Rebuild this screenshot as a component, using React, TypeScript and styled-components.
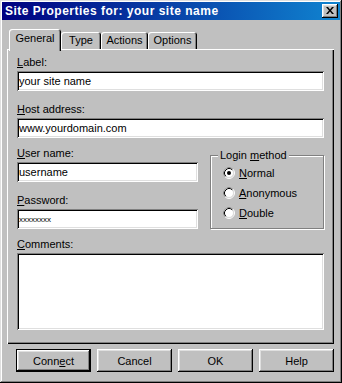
import React from "react";
import styled, { createGlobalStyle } from "styled-components";

const GlobalStyle = createGlobalStyle`
  html, body {
    margin: 0;
    padding: 0;
    background: #c0c0c0;
  }
  body {
    font-family: "Liberation Sans", Arial, sans-serif;
    font-size: 11px;
    color: #000;
  }
  * { box-sizing: border-box; }
`;

const Window = styled.div`
  width: 342px;
  height: 383px;
  padding: 2px;
  background: #c0c0c0;
  box-shadow: inset -1px -1px #000, inset 1px 1px #dfdfdf,
    inset -2px -2px #808080, inset 2px 2px #fff;
  display: flex;
  flex-direction: column;
`;

const TitleBar = styled.div`
  height: 18px;
  display: flex;
  align-items: center;
  justify-content: space-between;
  padding: 0 2px 0 3px;
  background: linear-gradient(90deg, #000080, #1084d0);
  color: #fff;
  font-weight: bold;
  font-size: 12px;
  letter-spacing: 0.5px;
`;

const CloseButton = styled.div`
  width: 16px;
  height: 14px;
  background: #c0c0c0;
  box-shadow: inset -1px -1px #000, inset 1px 1px #fff,
    inset -2px -2px #808080, inset 2px 2px #dfdfdf;
  display: flex;
  align-items: center;
  justify-content: center;
  padding-bottom: 1px;
`;

const Body = styled.div`
  padding: 9px 6px 0 5px;
  display: flex;
  flex-direction: column;
`;

const TabStrip = styled.div`
  display: flex;
  align-items: flex-end;
  height: 20px;
  padding-left: 2px;
  position: relative;
  z-index: 1;
`;

const Tab = styled.div<{ $active?: boolean; $w: number }>`
  width: ${(p) => p.$w}px;
  height: ${(p) => (p.$active ? 22 : 17)}px;
  margin-bottom: ${(p) => (p.$active ? -2 : 0)}px;
  background: #c0c0c0;
  border-radius: 3px 3px 0 0;
  box-shadow: inset 1px 1px #fff, inset -1px 0 #000, inset -2px 0 #808080;
  display: flex;
  justify-content: center;
  padding-top: ${(p) => (p.$active ? 3 : 2)}px;
  line-height: 13px;
`;

const Panel = styled.div`
  width: 327px;
  height: 295px;
  padding: 7px 10px 0 10px;
  box-shadow: inset 1px 1px #fff, inset -1px -1px #000,
    inset -2px -2px #808080;
  display: flex;
  flex-direction: column;
`;

const Field = styled.div<{ $mt?: number; $w?: number }>`
  margin-top: ${(p) => p.$mt ?? 0}px;
  width: ${(p) => (p.$w ? `${p.$w}px` : "auto")};
  display: flex;
  flex-direction: column;
`;

const Label = styled.div`
  height: 13px;
  line-height: 13px;
  margin-bottom: 2px;
`;

const Key = styled.span`
  text-decoration: underline;
`;

const sunken = `
  box-shadow: inset 1px 1px #808080, inset -1px -1px #fff,
    inset 2px 2px #000, inset -2px -2px #dfdfdf;
`;

const TextInput = styled.input<{ $small?: boolean }>`
  height: 20px;
  width: 100%;
  border: none;
  outline: none;
  padding: 0 2px;
  margin: 0;
  background: #fff;
  font-family: "Liberation Sans", Arial, sans-serif;
  font-size: ${(p) => (p.$small ? 8 : 11)}px;
  color: #000;
  ${sunken}
`;

const TextArea = styled.textarea`
  height: 77px;
  width: 100%;
  border: none;
  outline: none;
  resize: none;
  margin: 0;
  padding: 2px;
  background: #fff;
  font-family: "Liberation Sans", Arial, sans-serif;
  font-size: 11px;
  ${sunken}
`;

const Row = styled.div`
  display: flex;
  gap: 12px;
  margin-top: 9px;
`;

const GroupBox = styled.div`
  position: relative;
  margin-top: 8px;
  width: 114px;
  height: 74px;
  border: 1px solid #808080;
  box-shadow: inset 1px 1px #fff, 1px 1px #fff;
  padding: 7px 0 0 12px;
  display: flex;
  flex-direction: column;
`;

const Legend = styled.span`
  position: absolute;
  top: -7px;
  left: 7px;
  padding: 0 2px;
  background: #c0c0c0;
  line-height: 13px;
`;

const RadioItem = styled.div`
  height: 20px;
  display: flex;
  align-items: center;
  gap: 4px;
`;

const ButtonRow = styled.div`
  display: flex;
  gap: 6px;
  margin-top: 5px;
  margin-left: 9px;
`;

const Button = styled.div<{ $default?: boolean }>`
  width: 75px;
  height: 23px;
  display: flex;
  align-items: center;
  justify-content: center;
  background: #c0c0c0;
  box-shadow: ${(p) =>
    p.$default
      ? "inset 0 0 0 1px #000, inset -2px -2px #000, inset 2px 2px #fff, inset -3px -3px #808080, inset 3px 3px #dfdfdf"
      : "inset -1px -1px #000, inset 1px 1px #fff, inset -2px -2px #808080, inset 2px 2px #dfdfdf"};
`;

const Radio: React.FC<{ checked?: boolean }> = ({ checked }) => (
  <svg width="12" height="12" viewBox="0 0 12 12">
    <circle cx="6" cy="6" r="5.5" fill="none" stroke="#fff" />
    <path d="M2.11 9.89 A5.5 5.5 0 0 1 9.89 2.11" fill="none" stroke="#808080" />
    <circle cx="6" cy="6" r="4.5" fill="#fff" stroke="#dfdfdf" />
    <path d="M2.82 9.18 A4.5 4.5 0 0 1 9.18 2.82" fill="none" stroke="#000" />
    {checked && <circle cx="6" cy="6" r="2" fill="#000" />}
  </svg>
);

const CloseGlyph = () => (
  <svg width="8" height="7" viewBox="0 0 8 7">
    <path d="M0 0h2l2 2.5 2-2.5h2l-3 3.5 3 3.5h-2l-2-2.5-2 2.5h-2l3-3.5z" fill="#000" />
  </svg>
);

export default function App() {
  return (
    <>
      <GlobalStyle />
      <Window>
        <TitleBar>
          <span>Site Properties for: your site name</span>
          <CloseButton>
            <CloseGlyph />
          </CloseButton>
        </TitleBar>
        <Body>
          <TabStrip>
            <Tab $active $w={52}>General</Tab>
            <Tab $w={40}>Type</Tab>
            <Tab $w={47}>Actions</Tab>
            <Tab $w={49}>Options</Tab>
          </TabStrip>
          <Panel>
            <Field>
              <Label><Key>L</Key>abel:</Label>
              <TextInput readOnly defaultValue="your site name" />
            </Field>
            <Field $mt={12}>
              <Label><Key>H</Key>ost address:</Label>
              <TextInput readOnly defaultValue="www.yourdomain.com" />
            </Field>
            <Row>
              <Field $w={181}>
                <Label><Key>U</Key>ser name:</Label>
                <TextInput readOnly defaultValue="username" />
                <Field $mt={12}>
                  <Label><Key>P</Key>assword:</Label>
                  <TextInput readOnly $small defaultValue="xxxxxxxx" />
                </Field>
              </Field>
              <GroupBox>
                <Legend>Login <Key>m</Key>ethod</Legend>
                <RadioItem>
                  <Radio checked />
                  <span><Key>N</Key>ormal</span>
                </RadioItem>
                <RadioItem>
                  <Radio />
                  <span><Key>A</Key>nonymous</span>
                </RadioItem>
                <RadioItem>
                  <Radio />
                  <span><Key>D</Key>ouble</span>
                </RadioItem>
              </GroupBox>
            </Row>
            <Field $mt={9}>
              <Label><Key>C</Key>omments:</Label>
              <TextArea readOnly />
            </Field>
          </Panel>
          <ButtonRow>
            <Button $default>Conn<Key>e</Key>ct</Button>
            <Button>Cancel</Button>
            <Button>OK</Button>
            <Button>Help</Button>
          </ButtonRow>
        </Body>
      </Window>
    </>
  );
}
